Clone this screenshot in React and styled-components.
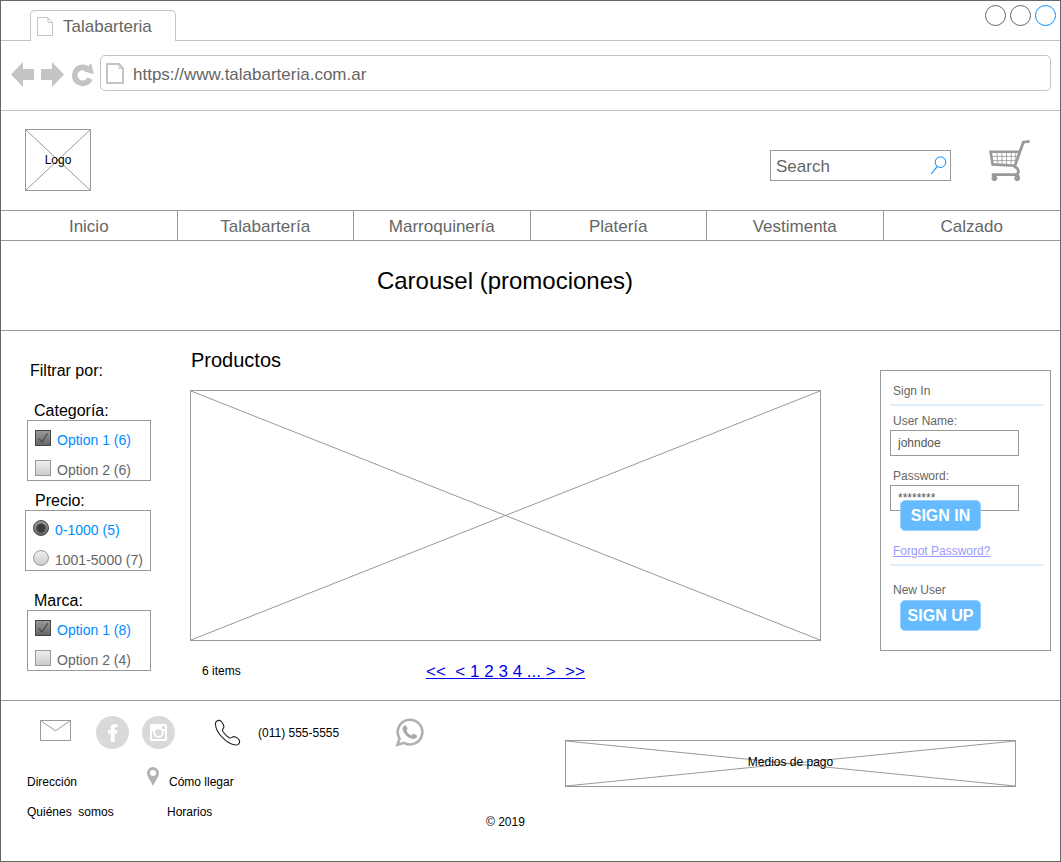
import React from 'react';
import styled, { createGlobalStyle } from 'styled-components';

const GlobalStyle = createGlobalStyle`
  *, *::before, *::after { box-sizing: border-box; }
  body {
    margin: 0;
    background: #fff;
    color: #000;
    font: 12px/20px "Liberation Sans", Arial, Helvetica, sans-serif;
  }
  input, button { font-family: inherit; margin: 0; }
  svg { display: block; flex: none; }
`;

const line = '#999';
const softLine = '#c4c4c4';
const ink = '#666';
const accent = '#008cff';

const Frame = styled.div`
  display: flex;
  flex-direction: column;
  min-height: 100vh;
  border: 1px solid ${ink};
`;

/* Browser chrome */
const TabStrip = styled.div`
  display: flex;
  align-items: flex-end;
  height: 40px;
`;
const StripStart = styled.div`
  width: 29px;
  border-bottom: 1px solid ${softLine};
`;
const StripEnd = styled.div`
  flex: 1;
  align-self: stretch;
  display: flex;
  justify-content: flex-end;
  gap: 4px;
  padding: 4px 4px 0 0;
  border-bottom: 1px solid ${softLine};
`;
const Tab = styled.div`
  display: flex;
  align-items: center;
  gap: 10px;
  width: 146px;
  height: 31px;
  padding-left: 6px;
  border: 1px solid ${softLine};
  border-bottom: 0;
  border-radius: 5px 5px 0 0;
  color: ${ink};
  font-size: 17px;
  span { padding-top: 2px; }
`;
const WindowButton = styled.button`
  width: 21px;
  height: 21px;
  padding: 0;
  border: 1px solid ${(p) => (p.$active ? accent : ink)};
  border-radius: 50%;
  background: none;
`;
const IconButton = styled.button`
  flex: none;
  padding: 0;
  border: 0;
  background: none;
  color: ${softLine};
`;
const Toolbar = styled.div`
  display: flex;
  align-items: center;
  gap: 7px;
  height: 70px;
  padding: 0 9px 6px 10px;
  border-bottom: 1px solid ${softLine};
  > ${IconButton} { padding-top: 4px; }
`;
const AddressBar = styled.label`
  flex: 1;
  display: flex;
  align-items: center;
  gap: 9px;
  height: 36px;
  padding: 2px 5px 0;
  margin-left: -1px;
  border: 1px solid ${softLine};
  border-radius: 5px;
`;
const BareInput = styled.input`
  flex: 1;
  min-width: 0;
  padding: 2px 0 0;
  border: 0;
  outline: 0;
  background: none;
  color: ${ink};
  font-size: 17px;
  line-height: 20px;
  &::placeholder { color: ${ink}; opacity: 1; }
`;

/* Store header */
const CrossBox = styled.div`
  display: grid;
  place-items: center;
  width: ${(p) => p.$width || 'auto'};
  height: ${(p) => p.$height};
  border: 1px solid ${line};
  font-size: 12px;
  line-height: 20px;
  > * { grid-area: 1 / 1; }
  > svg { width: 100%; height: 100%; min-height: 0; min-width: 0; }
  > span { z-index: 1; }
`;
const Header = styled.header`
  display: flex;
  align-items: center;
  height: 99px;
  padding: 0 30px 0 24px;
  > ${CrossBox} { margin-bottom: 2px; }
`;
const SearchBox = styled.form`
  display: flex;
  align-items: center;
  width: 181px;
  height: 31px;
  margin: 10px 37px 0 auto;
  padding: 0 3px 0 5px;
  border: 1px solid ${line};
`;
const NavBar = styled.nav`
  display: grid;
  grid-template-columns: repeat(6, 1fr);
  border: solid ${line};
  border-width: 1px 0;
`;
const NavLink = styled.a`
  height: 29px;
  padding-top: 1px;
  border-right: 1px solid ${line};
  color: ${ink};
  font-size: 17px;
  line-height: 29px;
  text-align: center;
  text-decoration: none;
  &:last-child { border-right: 0; }
`;
const Carousel = styled.section`
  height: 90px;
  padding: 25px 51px 0 0;
  border-bottom: 1px solid ${line};
  font-size: 24px;
  line-height: 30px;
  text-align: center;
`;

/* Catalogue */
const Main = styled.main`
  display: flex;
  align-items: flex-start;
  min-height: 370px;
  border-bottom: 1px solid ${line};
`;
const Sidebar = styled.aside`
  flex: none;
  width: 189px;
  padding-top: 29px;
`;
const SidebarTitle = styled.h2`
  height: 20px;
  margin: 0 0 20px 29px;
  font-size: 16px;
  line-height: 22px;
  font-weight: 400;
`;
const Filter = styled.fieldset`
  min-width: 0;
  margin: 0 0 ${(p) => p.$after || 9}px;
  padding: 0 0 0 ${(p) => (p.$wide ? 24 : 26)}px;
  border: 0;
`;
const FilterTitle = styled.legend`
  height: 20px;
  padding: 0 0 0 ${(p) => (p.$wide ? 10 : 7)}px;
  font-size: 16px;
  line-height: 22px;
`;
const Options = styled.div`
  display: flex;
  flex-direction: column;
  gap: 10px;
  width: ${(p) => (p.$wide ? 126 : 124)}px;
  padding: 9px 0 0 7px;
  border: 1px solid ${line};
`;
const Option = styled.label`
  display: flex;
  align-items: flex-start;
  gap: 6px;
  color: ${ink};
  font-size: 14px;
  line-height: 20px;
  white-space: nowrap;
  &:has(input:checked) { color: ${accent}; }
`;
const Tick = styled.span`
  display: grid;
  > * { grid-area: 1 / 1; }
  > svg { pointer-events: none; visibility: hidden; }
  > input:checked + svg { visibility: visible; }
`;
const Choice = styled.input`
  appearance: none;
  width: 16px;
  height: 16px;
  border: 1px solid ${line};
  background: linear-gradient(#eee, #ccc);
  &[type='radio'] { border-radius: 50%; }
  &:checked { border-color: #444; background: linear-gradient(#999, #666); }
  &[type='radio']:checked {
    background: radial-gradient(circle, #3c3c3c 4px, transparent 5px), linear-gradient(#999, #666);
  }
`;

const Products = styled.section`
  flex: 1;
  min-width: 0;
  padding-top: 19px;
`;
const ProductsTitle = styled.h1`
  margin: 0 0 20px;
  padding-left: 1px;
  font-size: 20px;
  line-height: 20px;
  font-weight: 400;
`;
const ListFooter = styled.div`
  display: grid;
  grid-template-columns: 1fr auto 1fr;
  padding-top: 20px;
`;
const Count = styled.span`
  padding-left: 12px;
  line-height: 20px;
`;
const Pager = styled.nav`
  color: #0000ee;
  font-size: 17px;
  line-height: 22px;
  white-space: pre;
  text-decoration: underline;
  a { color: inherit; text-decoration: none; }
`;

/* Account panel */
const Account = styled.form`
  flex: none;
  width: 171px;
  margin: 39px 9px 49px 59px;
  padding: 10px 6px 19px 9px;
  border: 1px solid ${line};
  color: ${ink};
`;
const PanelText = styled.div`
  padding-left: 3px;
  line-height: 20px;
`;
const Rule = styled.hr`
  height: 2px;
  margin: 3px 0 ${(p) => p.$after}px;
  border: 0;
  background: #ddeeff;
`;
const Field = styled.label`
  display: block;
  margin-bottom: 10px;
  span { display: block; height: 19px; padding-left: 3px; line-height: 20px; }
`;
const TextInput = styled.input`
  display: block;
  width: 129px;
  height: 26px;
  padding: 0 7px;
  border: 1px solid ${line};
  color: #555;
  font-size: 12px;
`;
const ActionButton = styled.button`
  display: block;
  position: relative;
  width: 81px;
  height: 31px;
  margin: ${(p) => (p.$overlap ? '-21px 0 10px 10px' : '0 0 0 10px')};
  padding: 0;
  border: 1px solid #99d0ff;
  border-radius: 5px;
  background: #66bbff;
  color: #fff;
  font-size: 16px;
  font-weight: 700;
  line-height: 20px;
`;
const ForgotLink = styled.a`
  color: #9999ff;
`;

/* Footer */
const Footer = styled.footer`
  flex: 1;
  display: flex;
  align-items: flex-start;
  padding-right: 44px;
`;
const Contact = styled.div`
  flex: none;
  width: 485px;
  padding-top: 14px;
`;
const ContactRow = styled.div`
  display: flex;
  align-items: center;
  height: 35px;
  padding-left: 39px;
  a { display: block; color: inherit; text-decoration: none; }
  a:first-child { padding-bottom: 4px; }
`;
const Social = styled.a`
  && { display: grid; }
  place-items: center;
  width: 33px;
  height: 33px;
  margin-left: ${(p) => p.$space}px;
  border-radius: 50%;
  background: #d9d9d9;
`;
const Phone = styled.a`
  && { display: flex; }
  align-items: center;
  gap: 17px;
  margin: 0 56px 0 39px;
`;
const Links = styled.div`
  display: grid;
  grid-template-columns: 120px auto;
  row-gap: 10px;
  padding: 22px 0 0 26px;
  a { display: flex; gap: 10px; color: #000; line-height: 20px; text-decoration: none; white-space: pre; }
  a:last-child { padding-left: 20px; }
  svg { margin-top: -5px; }
`;
const Copyright = styled.small`
  flex: none;
  width: 79px;
  padding-top: 111px;
  font-size: 12px;
  line-height: 20px;
`;
const Payments = styled.div`
  flex: 1;
  min-width: 0;
  padding-top: 39px;
  span { padding-bottom: 3px; }
`;

const Cross = () => (
  <svg viewBox="0 0 100 100" preserveAspectRatio="none" aria-hidden="true">
    <path d="M0 0 100 100M100 0 0 100" stroke={line} fill="none" vectorEffect="non-scaling-stroke" />
  </svg>
);

const PageIcon = ({ width, height, weight }) => (
  <svg width={width} height={height} viewBox={`0 0 ${width} ${height}`} fill="none" stroke={softLine} strokeWidth={weight}>
    <path d={`M${weight / 2} ${weight / 2}H${width - 5}L${width - weight / 2} 5.5V${height - weight / 2}H${weight / 2}Z`} />
    <path d={`M${width - 5} 1V5.5H${width - 1}`} strokeWidth="1" />
  </svg>
);

const Arrow = ({ forward }) => (
  <svg width="23" height="25" viewBox="0 0 23 25" fill="currentColor">
    <path d={forward ? 'M23 12.5 11 0V7H0V18H11V25Z' : 'M0 12.5 12 0V7H23V18H12V25Z'} />
  </svg>
);

const Reload = () => (
  <svg width="23" height="24" viewBox="0 0 23 24" fill="none">
    <path d="M18 7.4A8 8 0 1 0 19 15.6" stroke="currentColor" strokeWidth="5.6" />
    <path d="M20.2 .3 22.8 11.2 12.2 8Z" fill="currentColor" />
  </svg>
);

const SearchIcon = () => (
  <svg width="17" height="19" viewBox="0 0 17 19" fill="none" stroke={accent}>
    <circle cx="10.5" cy="6.2" r="5.3" />
    <path d="M7.4 10.4 1.2 18" strokeWidth="1.1" />
  </svg>
);

const CartIcon = () => (
  <svg width="42" height="43" viewBox="0 0 42 43" fill="none" stroke={line}>
    <path d="M41.5 2.3 35.3 3.2 27 26.6" strokeWidth="2.8" />
    <path d="M1.2 12.8H31.5M2.6 12.6 4.6 25.4 27.4 26.8" strokeWidth="2.6" />
    <path d="M9 13 9.8 26M13.8 13 14.2 26M18.6 13 18.6 26M23.4 13 23 26M28 13 26.8 22M3 17.4H30M3.6 21.6H28.5" strokeWidth="1" strokeOpacity=".8" />
    <path d="M25.5 26.8C28 28.2 30.8 30.6 30.4 33L29.2 35.6H3.7" strokeWidth="2.8" />
    <path d="M6.4 36V38M29.4 36V38" strokeWidth="4" />
    <g fill={line} stroke="none">
      <circle cx="6.4" cy="39.2" r="2.8" />
      <circle cx="29.2" cy="39.2" r="2.8" />
    </g>
  </svg>
);

const CheckIcon = () => (
  <svg width="16" height="16" viewBox="0 0 16 16" fill="none" stroke="#444" strokeWidth="1.1">
    <path d="M4 8.7 7 12.2 12.7 3.2" />
  </svg>
);

const MailIcon = () => (
  <svg width="31" height="21" viewBox="0 0 31 21" fill="none" stroke={line}>
    <path d="M.5.5H30.5V20.5H.5ZM.5.5 15.5 10.8 30.5.5" />
  </svg>
);

const FacebookIcon = () => (
  <svg width="10" height="18" viewBox="0 0 10 18" fill="#fff">
    <path d="M2.8 18V9.4H.2V6H2.8V4.2C2.8 1.4 4.3 0 7 0H9.4V3.3H7.8C6.9 3.3 6.6 3.8 6.6 4.6V6H9.4L9 9.4H6.6V18Z" />
  </svg>
);

const InstagramIcon = () => (
  <svg width="17" height="17" viewBox="0 0 17 17">
    <rect width="17" height="17" rx="1.6" fill="#fff" />
    <rect x="2" y="7" width="13" height="8" rx="1" fill="#d9d9d9" />
    <rect x="12" y="2" width="3" height="3" rx=".5" fill="#d9d9d9" />
    <circle cx="8.5" cy="8.6" r="5.2" fill="#fff" />
    <circle cx="8.5" cy="8.6" r="3.4" fill="#d9d9d9" />
  </svg>
);

const PhoneIcon = () => (
  <svg width="27" height="27" viewBox="0 0 27 27" fill="none" stroke="#222" strokeWidth="1.1">
    <path d="M5.6 1.4C3.6 1.2 1.4 2.8 1.4 4.4 1.4 9.6 5.4 15.4 8.6 18.6 12 22 15.4 24.4 18.2 25.2 20.4 25.9 22.8 26.2 23.8 25.6 25.2 24.8 25.8 23.4 25.6 21.8 25.2 20.2 22 17.6 20 17.6 18.2 17.6 17.2 19.4 15.6 19 13.6 18 10.6 15 9.2 13 8.4 11.8 8.2 11 8.8 10 9.6 9 10.2 8.4 9.8 7 9.2 4.8 7.2 1.6 5.6 1.4Z" />
  </svg>
);

const WhatsappIcon = () => (
  <svg width="30" height="29" viewBox="0 0 30 29">
    <path d="M2.4 26.8 4.6 20.6A12.3 12.3 0 1 1 9 24.8Z" fill="none" stroke="#b0b0b0" strokeWidth="2.6" />
    <path d="M9.7 7.4C7.6 8 7 10.2 7.8 12.4 9.4 16.4 13 19.6 17 20.8 19.6 21.4 21.8 20.2 22 18.2 22 17.2 18.9 15.6 18.2 15.9 17.5 16.2 17 17.4 16.3 17.3 14.6 16.6 12.4 14.8 11.7 12.9 11.5 12.1 12.7 11.4 12.6 10.6 12.4 9.8 11.4 7.8 10.9 7.5Z" fill="#aaa" />
  </svg>
);

const PinIcon = () => (
  <svg width="12" height="19" viewBox="0 0 12 19" fill="#b3b3b3">
    <path fillRule="evenodd" d="M6 0A6 6 0 0 0 0 6C0 9.5 4 14.5 6 19 8 14.5 12 9.5 12 6A6 6 0 0 0 6 0ZM6 3A3 3 0 1 1 6 9 3 3 0 0 1 6 3Z" />
  </svg>
);

const sections = ['Inicio', 'Talabartería', 'Marroquinería', 'Platería', 'Vestimenta', 'Calzado'];

function FilterGroup({ title, type = 'checkbox', name, options, after }) {
  const wide = type === 'radio';
  return (
    <Filter $wide={wide} $after={after}>
      <FilterTitle $wide={wide}>{title}</FilterTitle>
      <Options $wide={wide}>
        {options.map((text, i) => (
          <Option key={text}>
            <Tick>
              <Choice type={type} name={name} defaultChecked={i === 0} />
              {!wide && <CheckIcon />}
            </Tick>
            {text}
          </Option>
        ))}
      </Options>
    </Filter>
  );
}

export default function App() {
  return (
    <Frame>
      <GlobalStyle />
      <TabStrip>
        <StripStart />
        <Tab><PageIcon width={16} height={19} weight={1} /><span>Talabarteria</span></Tab>
        <StripEnd>
          <WindowButton type="button" aria-label="Minimizar" />
          <WindowButton type="button" aria-label="Maximizar" />
          <WindowButton type="button" aria-label="Cerrar" $active />
        </StripEnd>
      </TabStrip>
      <Toolbar>
        <IconButton type="button" aria-label="Atrás"><Arrow /></IconButton>
        <IconButton type="button" aria-label="Adelante"><Arrow forward /></IconButton>
        <IconButton type="button" aria-label="Recargar"><Reload /></IconButton>
        <AddressBar>
          <PageIcon width={18} height={21} weight={2} />
          <BareInput aria-label="Dirección web" defaultValue="https://www.talabarteria.com.ar" />
        </AddressBar>
      </Toolbar>

      <Header>
        <CrossBox $width="66px" $height="62px"><Cross /><span>Logo</span></CrossBox>
        <SearchBox role="search">
          <BareInput aria-label="Search" placeholder="Search" />
          <IconButton type="button" aria-label="Buscar"><SearchIcon /></IconButton>
        </SearchBox>
        <IconButton type="button" aria-label="Carrito"><CartIcon /></IconButton>
      </Header>
      <NavBar>
        {sections.map((s) => <NavLink href="#" key={s}>{s}</NavLink>)}
      </NavBar>
      <Carousel>Carousel (promociones)</Carousel>

      <Main>
        <Sidebar>
          <SidebarTitle>Filtrar por:</SidebarTitle>
          <FilterGroup title="Categoría:" name="categoria" options={['Option 1 (6)', 'Option 2 (6)']} />
          <FilterGroup title="Precio:" name="precio" type="radio" after={19} options={['0-1000 (5)', '1001-5000 (7)']} />
          <FilterGroup title="Marca:" name="marca" options={['Option 1 (8)', 'Option 2 (4)']} />
        </Sidebar>
        <Products>
          <ProductsTitle>Productos</ProductsTitle>
          <CrossBox $height="251px"><Cross /></CrossBox>
          <ListFooter>
            <Count>6 items</Count>
            <Pager>
              <a href="#">{'<<'}</a>{'  '}<a href="#">{'<'}</a>{' '}<a href="#">1</a>{' '}<a href="#">2</a>{' '}<a href="#">3</a>{' '}<a href="#">4</a>{' ... '}<a href="#">{'>'}</a>{'  '}<a href="#">{'>>'}</a>
            </Pager>
          </ListFooter>
        </Products>
        <Account>
          <PanelText>Sign In</PanelText>
          <Rule $after={5} />
          <Field><span>User Name:</span><TextInput defaultValue="johndoe" /></Field>
          <Field><span>Password:</span><TextInput defaultValue="********" /></Field>
          <ActionButton type="button" $overlap>SIGN IN</ActionButton>
          <PanelText><ForgotLink href="#">Forgot Password?</ForgotLink></PanelText>
          <Rule $after={14} />
          <PanelText>New User</PanelText>
          <ActionButton type="button">SIGN UP</ActionButton>
        </Account>
      </Main>

      <Footer>
        <Contact>
          <ContactRow>
            <a href="#" aria-label="Correo"><MailIcon /></a>
            <Social href="#" aria-label="Facebook" $space={25}><FacebookIcon /></Social>
            <Social href="#" aria-label="Instagram" $space={13}><InstagramIcon /></Social>
            <Phone href="#"><PhoneIcon />(011) 555-5555</Phone>
            <a href="#" aria-label="WhatsApp"><WhatsappIcon /></a>
          </ContactRow>
          <Links>
            <a href="#">Dirección</a>
            <a href="#"><PinIcon />Cómo llegar</a>
            <a href="#">Quiénes  somos</a>
            <a href="#">Horarios</a>
          </Links>
        </Contact>
        <Copyright>© 2019</Copyright>
        <Payments>
          <CrossBox $height="47px"><Cross /><span>Medios de pago</span></CrossBox>
        </Payments>
      </Footer>
    </Frame>
  );
}
